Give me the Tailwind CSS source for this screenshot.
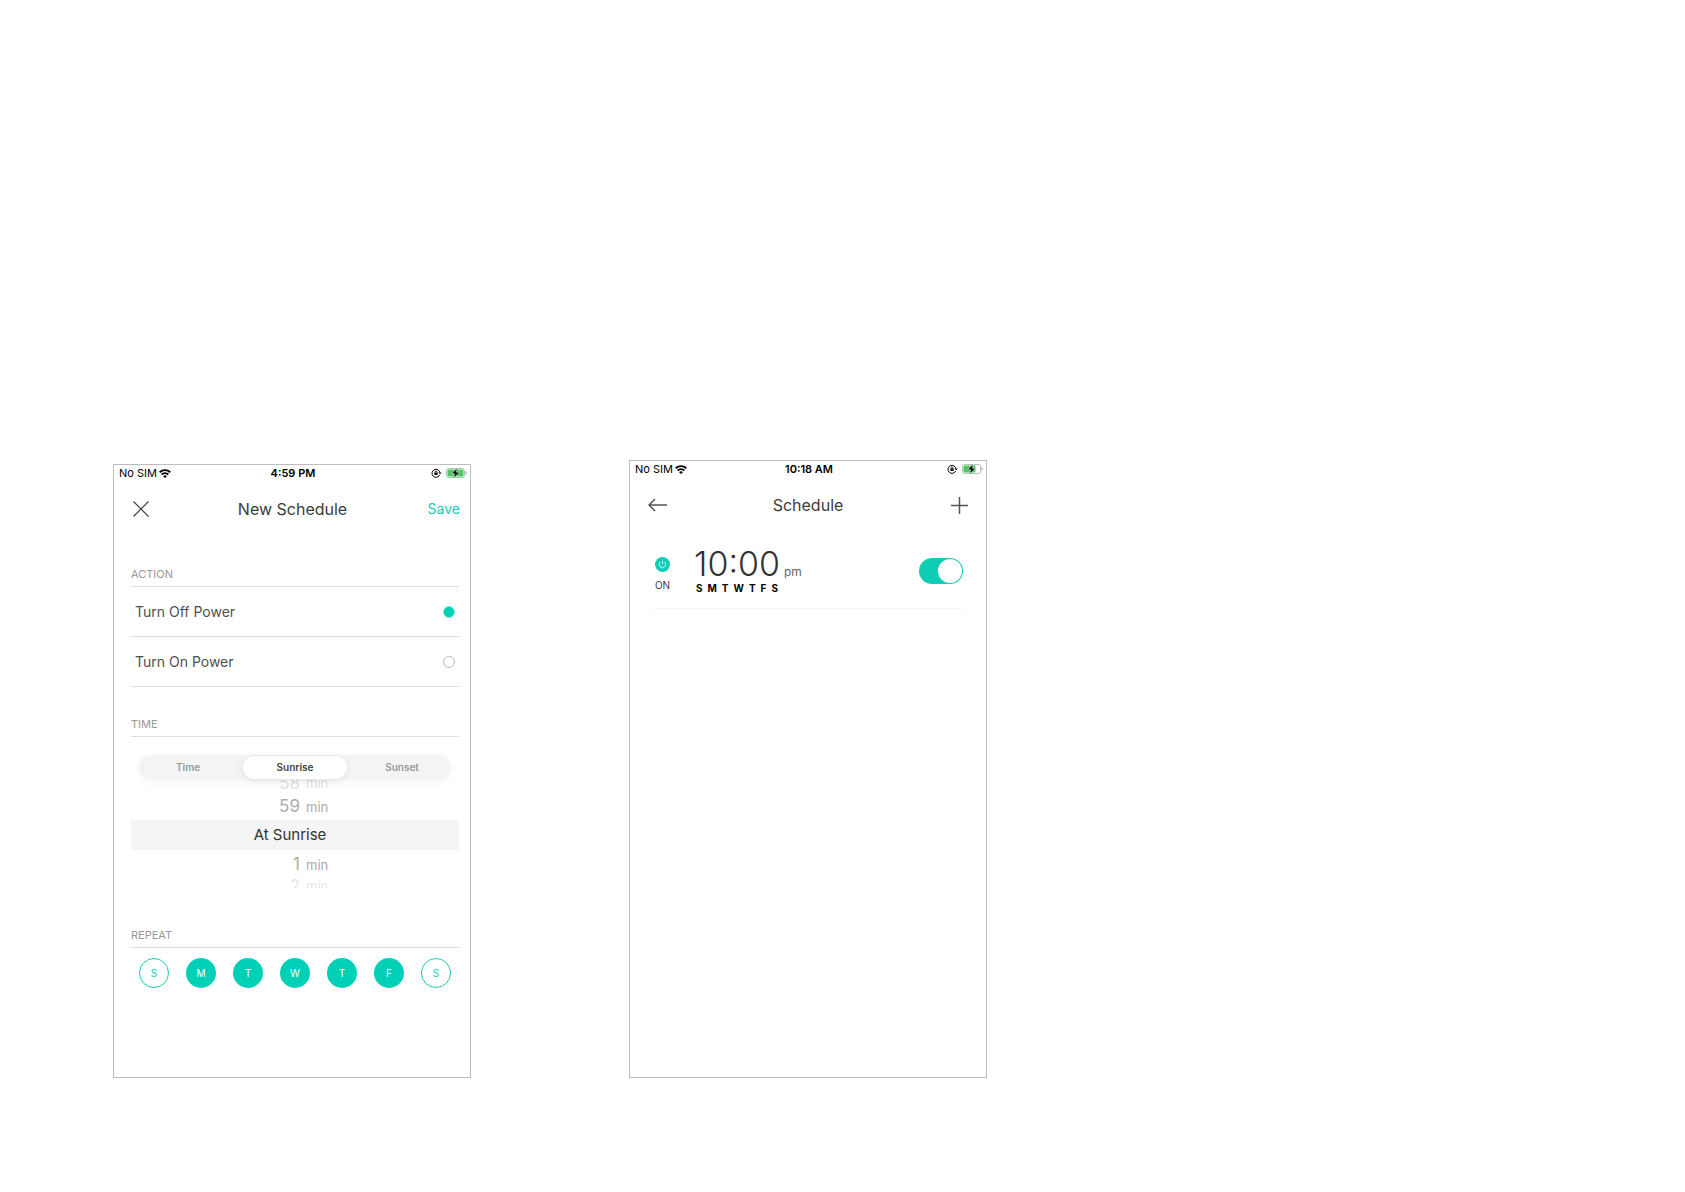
<!DOCTYPE html>
<html lang="en">
<head>
    <meta charset="UTF-8">
    <meta name="viewport" content="width=device-width, initial-scale=1.0">
    <title>Schedule</title>
    <script src="https://cdn.jsdelivr.net/npm/@tailwindcss/browser@4"></script>
</head>
<body class="bg-white font-['Inter',sans-serif] text-[#3c3c3c]">

    <main class="flex min-h-screen items-end gap-[158px] pb-[114px] pl-[113px]">

        <!-- New Schedule -->
        <section class="min-h-[614px] w-[358px] border border-[#bdbdbd] bg-white">
            <div class="grid h-4 grid-cols-[1fr_auto_1fr] items-center pr-[3px] pl-[5px] text-[11px] leading-4 text-black">
                <span class="flex items-center gap-[2px]">No SIM
                    <svg class="h-[9px] w-3" viewBox="0 0 12 9" fill="none" stroke="currentColor" stroke-width="1.9"><path d="M.7 3.3a7.6 7.6 0 0 1 10.6 0M2.7 5.5a4.8 4.8 0 0 1 6.6 0"/><path d="M6 9 4.1 7.2a2.7 2.7 0 0 1 3.8 0z" fill="currentColor" stroke="none"/></svg>
                </span>
                <span class="text-center font-semibold">4:59 PM</span>
                <span class="flex items-center justify-end gap-1">
                    <svg class="h-[10px] w-[11px]" viewBox="0 0 11 10" fill="none" stroke="currentColor"><path d="M8.7 6.9A4 4 0 1 1 9 5M7.8 4.6 9 5.8l1.3-1.2"/><path d="M3.4 4.6h3.2v2.3H3.4z" fill="currentColor" stroke="none"/><path d="M4 4.7V4a1 1 0 0 1 2 0v.7" stroke-width=".8"/></svg>
                    <svg class="h-[10px] w-[21px]" viewBox="0 0 21 10"><rect x=".5" y=".5" width="18" height="9" rx="2" fill="#fff" stroke="#9bcfa8"/><rect x="1.5" y="1.5" width="16" height="7" rx="1" fill="#4cc764"/><path d="M20 3.5v3" stroke="#999"/><path d="M11.3 0 5.6 5.7h3.1L7.6 10l6-5.8h-3.2z" fill="#000" stroke="#fff" stroke-width=".5"/></svg>
                </span>
            </div>

            <header class="grid h-14 grid-cols-[1fr_auto_1fr] items-center pr-[10px] pl-[19px]">
                <button class="justify-self-start" aria-label="Close">
                    <svg class="size-4" viewBox="0 0 16 16" fill="none" stroke="#444" stroke-width="1.2"><path d="m.5.5 15 15m0-15-15 15"/></svg>
                </button>
                <h1 class="pr-2 text-base">New Schedule</h1>
                <button class="justify-self-end text-sm text-[#1cc9b2]">Save</button>
            </header>

            <div class="pr-[11px] pl-[17px]">
                <h2 class="flex h-[50px] items-end border-b border-[#dedede] pb-1 text-[11px] leading-4 text-[#999]">ACTION</h2>
                <label class="flex h-[50px] items-center justify-between border-b border-[#dedede] pt-px pr-1 pl-1 text-sm text-[#505050]">
                    Turn Off Power
                    <input type="radio" name="action" checked class="size-3 appearance-none rounded-full border border-[#bbb] checked:border-[#7fe5d8] checked:bg-[#00d1b6]">
                </label>
                <label class="flex h-[50px] items-center justify-between border-b border-[#dedede] pt-px pr-1 pl-1 text-sm text-[#505050]">
                    Turn On Power
                    <input type="radio" name="action" class="size-3 appearance-none rounded-full border border-[#bbb] checked:border-[#7fe5d8] checked:bg-[#00d1b6]">
                </label>

                <h2 class="flex h-[50px] items-end border-b border-[#dedede] pb-1 text-[11px] leading-4 text-[#999]">TIME</h2>
                <div class="relative mx-2 mt-[18px] grid h-[25px] grid-cols-3 rounded-full bg-[#f4f4f4] text-[10px] font-semibold text-[#999] shadow-[0_2px_12px_#0000000a]">
                    <button class="pr-[6px]">Time</button>
                    <button class="my-px rounded-full bg-white text-[#444] shadow-[0_1px_6px_#00000018]">Sunrise</button>
                    <button class="pl-[6px]">Sunset</button>
                </div>

                <!-- Offset picker -->
                <div class="text-[17px] text-[#ababab]">
                    <div class="flex h-3 items-end justify-center gap-[6px] overflow-hidden leading-[18px] text-[#e2e2e2]">
                        <span class="w-10 text-right">58</span><span class="w-6 text-[13px] leading-[18px]">min</span>
                    </div>
                    <div class="flex h-7 items-baseline justify-center gap-[6px] leading-7">
                        <span class="w-10 text-right">59</span><span class="w-6 text-[13px]">min</span>
                    </div>
                    <div class="flex h-[30px] items-center justify-center bg-[#f5f5f5] pr-[10px] text-[15px] text-[#333]">At Sunrise</div>
                    <div class="flex h-7 items-baseline justify-center gap-[6px] leading-7">
                        <span class="w-10 text-right">1</span><span class="w-6 text-[13px]">min</span>
                    </div>
                    <div class="flex h-[10px] items-start justify-center gap-[6px] overflow-hidden leading-4 text-[#e8e8e8]">
                        <span class="w-10 text-right">2</span><span class="w-6 text-[13px] leading-4">min</span>
                    </div>
                </div>

                <h2 class="mt-[10px] flex h-[50px] items-end border-b border-[#dedede] pb-1 text-[11px] leading-4 text-[#999]">REPEAT</h2>
                <div class="mx-2 mt-[10px] flex justify-between text-[10px] text-white">
                    <button class="size-[30px] rounded-full border border-[#1cc9b2] text-[#1cc9b2]">S</button>
                    <button class="size-[30px] rounded-full bg-[#00d1b6]">M</button>
                    <button class="size-[30px] rounded-full bg-[#00d1b6]">T</button>
                    <button class="size-[30px] rounded-full bg-[#00d1b6]">W</button>
                    <button class="size-[30px] rounded-full bg-[#00d1b6]">T</button>
                    <button class="size-[30px] rounded-full bg-[#00d1b6]">F</button>
                    <button class="size-[30px] rounded-full border border-[#1cc9b2] text-[#1cc9b2]">S</button>
                </div>
            </div>
        </section>

        <!-- Schedule list -->
        <section class="min-h-[618px] w-[358px] border border-[#bdbdbd] bg-white">
            <div class="grid h-4 grid-cols-[1fr_auto_1fr] items-center pr-[3px] pl-[5px] text-[11px] leading-4 text-black">
                <span class="flex items-center gap-[2px]">No SIM
                    <svg class="h-[9px] w-3" viewBox="0 0 12 9" fill="none" stroke="currentColor" stroke-width="1.9"><path d="M.7 3.3a7.6 7.6 0 0 1 10.6 0M2.7 5.5a4.8 4.8 0 0 1 6.6 0"/><path d="M6 9 4.1 7.2a2.7 2.7 0 0 1 3.8 0z" fill="currentColor" stroke="none"/></svg>
                </span>
                <span class="text-center font-semibold">10:18 AM</span>
                <span class="flex items-center justify-end gap-1">
                    <svg class="h-[10px] w-[11px]" viewBox="0 0 11 10" fill="none" stroke="currentColor"><path d="M8.7 6.9A4 4 0 1 1 9 5M7.8 4.6 9 5.8l1.3-1.2"/><path d="M3.4 4.6h3.2v2.3H3.4z" fill="currentColor" stroke="none"/><path d="M4 4.7V4a1 1 0 0 1 2 0v.7" stroke-width=".8"/></svg>
                    <svg class="h-[10px] w-[21px]" viewBox="0 0 21 10"><rect x=".5" y=".5" width="18" height="9" rx="2" fill="#fff" stroke="#a9c7b0"/><rect x="1.5" y="1.5" width="12" height="7" rx="1" fill="#4cc764"/><path d="M20 3.5v3" stroke="#999"/><path d="M11.3 0 5.6 5.7h3.1L7.6 10l6-5.8h-3.2z" fill="#000" stroke="#fff" stroke-width=".5"/></svg>
                </span>
            </div>

            <header class="grid h-14 grid-cols-[1fr_auto_1fr] items-center px-[18px]">
                <button class="justify-self-start" aria-label="Back">
                    <svg class="h-[14px] w-[19px]" viewBox="0 0 19 14" fill="none" stroke="#555" stroke-width="1.5"><path d="M19 7H1.2M7 1 1 7l6 6"/></svg>
                </button>
                <h1 class="text-base">Schedule</h1>
                <button class="justify-self-end" aria-label="Add schedule">
                    <svg class="size-[17px]" viewBox="0 0 17 17" fill="none" stroke="#555" stroke-width="1.5"><path d="M8.5 0v17M0 8.5h17"/></svg>
                </button>
            </header>

            <div class="mr-[23px] ml-[23px] flex h-[76px] items-center border-b border-[#f5f5f5]">
                <div class="flex w-[19px] flex-col items-center gap-[5px] pt-[9px] text-[10px] leading-4">
                    <svg class="size-[15px]" viewBox="0 0 15 15" fill="none" stroke="#b9fff4"><circle cx="7.5" cy="7.5" r="7.5" fill="#10cdb5" stroke="none"/><path d="M7.5 3.8v3.4M5.4 5a3.2 3.2 0 1 0 4.2 0"/></svg>
                    ON
                </div>
                <div class="ml-[22px] pt-px">
                    <div class="flex items-baseline gap-1 text-[34px] leading-[34px] font-light text-[#333]">10:00<span class="text-xs font-normal text-[#666]">pm</span></div>
                    <div class="flex w-[84px] justify-between pl-[2px] text-[10px] leading-[14px] font-bold text-black">
                        <span>S</span><span>M</span><span>T</span><span>W</span><span>T</span><span>F</span><span>S</span>
                    </div>
                </div>
                <label class="ml-auto flex h-[26px] w-11 items-center justify-end rounded-full bg-[#10cdb5] pr-px">
                    <input type="checkbox" role="switch" aria-label="10:00 pm schedule" checked class="size-6 appearance-none rounded-full bg-white">
                </label>
            </div>
        </section>
    </main>

</body>
</html>
